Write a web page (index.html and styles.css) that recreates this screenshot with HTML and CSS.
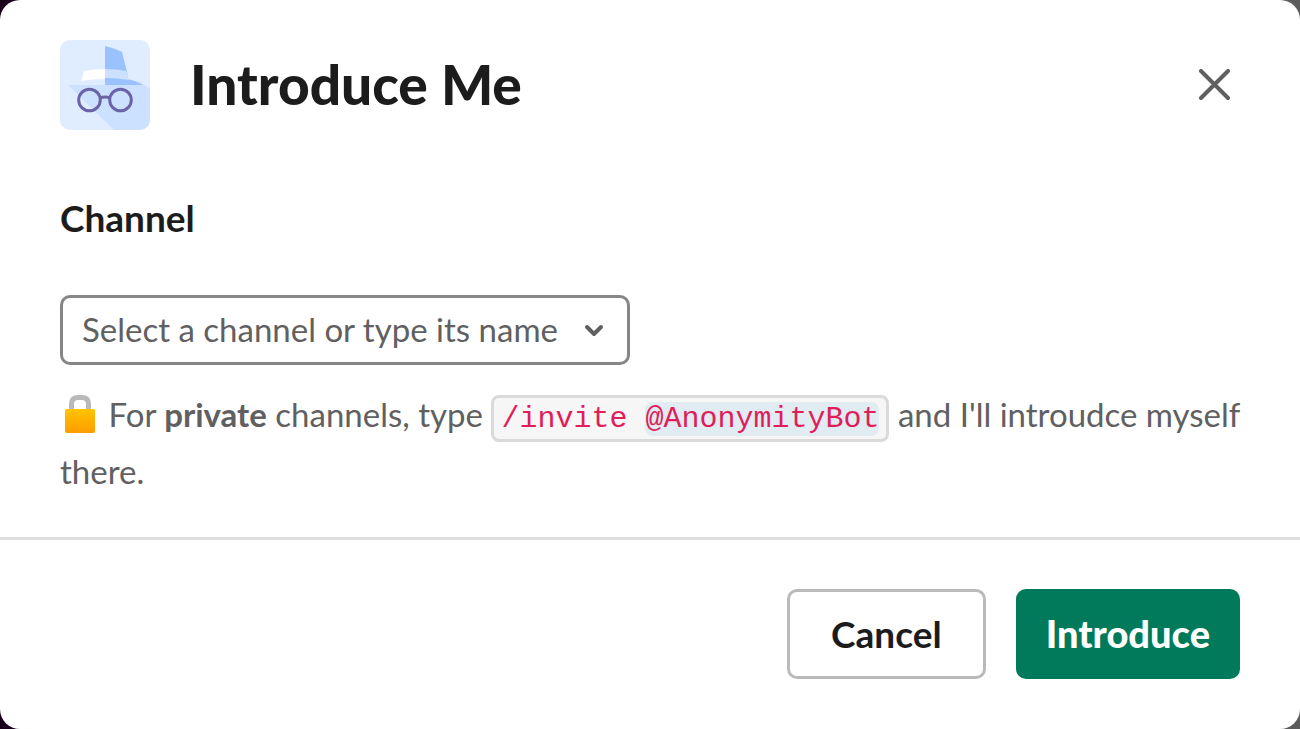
FILE: index.html
```html
<!DOCTYPE html>
<html lang="en">
<head>
<meta charset="utf-8">
<meta name="viewport" content="width=device-width, initial-scale=1">
<title>Introduce Me</title>
<link rel="stylesheet" href="styles.css">
</head>
<body>
<form class="modal" role="dialog" aria-labelledby="modal-title">
  <header class="modal-header">
    <svg class="app-icon" viewBox="0 0 90 90" aria-hidden="true">
      <path fill="#e0ecff" d="M0 0h90v90H0z"/>
      <path fill="#cce0ff" d="M8 45H82L76 39L90 49V90H54Z"/>
      <path fill="#fff" d="M24 31Q34 29 45 29V39Q32 39 21 41Z"/>
      <path fill="#99c2ff" d="M45 6Q54 8 62 12L67 32L68 39Q77 41 83 45H45Z"/>
      <path fill="#cce0ff" d="M45 29Q57 29 66 31L69 40Q57 38 45 38Z"/>
      <g fill="none" stroke="#6a63a8" stroke-width="3">
        <circle cx="29.500" cy="60" r="10.800"/>
        <circle cx="60.500" cy="60" r="10.800"/>
        <path d="M40 58Q45 56 50 58"/>
      </g>
    </svg>
    <h1 class="modal-title" id="modal-title">Introduce Me</h1>
    <button class="close-button" type="button" aria-label="Close">
      <svg class="close-icon" viewBox="0 0 32 32" aria-hidden="true"><path d="M3 2L30 29M30 2L3 29"/></svg>
    </button>
  </header>
  <div class="modal-body">
    <label class="field-label" for="channel">Channel</label>
    <div class="select-wrap">
      <select class="channel-select" id="channel">
        <option>Select a channel or type its name</option>
      </select>
      <svg class="chevron" viewBox="0 0 20 14" aria-hidden="true"><path d="M3 3L10 10L17 3"/></svg>
    </div>
    <p class="hint">
      <svg class="lock" viewBox="0 0 40 40" role="img" aria-label="Lock">
        <defs>
          <linearGradient id="lock-body" x2="0" y2="1"><stop stop-color="#ffc400"/><stop offset="1" stop-color="#ff9b00"/></linearGradient>
        </defs>
        <path fill="none" stroke="#b9b9b9" stroke-width="5" d="M11.500 17V10Q11.500 3.500 18 3.500H22Q28.500 3.500 28.500 10V17"/>
        <rect x="5" y="15" width="30" height="24" rx="2" fill="url(#lock-body)"/>
      </svg>
      For <strong>private</strong> channels, type <code class="command">/invite <span class="mention">@AnonymityBot</span></code> and I'll introudce myself there.
    </p>
  </div>
  <footer class="modal-footer">
    <button class="button button-cancel" type="button">Cancel</button>
    <button class="button button-primary" type="submit">Introduce</button>
  </footer>
</form>
</body>
</html>
```
FILE: styles.css
```css
*,
*::before,
*::after {
  box-sizing: border-box;
}

body {
  margin: 0;
  min-height: 100vh;
  display: flex;
  background: linear-gradient(90deg, #1a001a 50%, #5c5c5c 50%);
  color: #1d1c1d;
  font-family: Lato, "Liberation Sans", sans-serif;
}

.modal {
  flex: 1;
  display: flex;
  flex-direction: column;
  background: #fff;
  border-radius: 20px;
}

.modal-header {
  display: flex;
  align-items: center;
  gap: 40px;
  padding: 40px 60px;
}

.app-icon {
  flex: none;
  width: 90px;
  height: 90px;
  border-radius: 10px;
}

.modal-title {
  flex: 1;
  margin: 0;
  padding-bottom: 2px;
  font-family: "Lato Black", Lato, "Liberation Sans", sans-serif;
  font-size: 55px;
  line-height: 70px;
  font-weight: 900;
}

.close-button {
  display: flex;
  padding: 10px;
  border: 0;
  background: none;
}

.close-icon {
  width: 32px;
  height: 32px;
  fill: none;
  stroke: #616061;
  stroke-width: 4;
  stroke-linecap: round;
}

.modal-body {
  flex: 1;
  padding: 20px 60px 37px;
}

.field-label {
  display: block;
  margin-bottom: 50px;
  font-size: 37px;
  line-height: 55px;
  font-weight: 700;
}

.select-wrap {
  position: relative;
  max-width: 570px;
}

.channel-select {
  display: block;
  width: 100%;
  height: 70px;
  padding: 0 60px 2px 19px;
  appearance: none;
  border: 3px solid #868686;
  border-radius: 10px;
  background: #fff;
  color: #616061;
  font: 400 33px/50px Lato, "Liberation Sans", sans-serif;
}

.chevron {
  position: absolute;
  right: 26px;
  top: 29px;
  width: 20px;
  height: 14px;
  fill: none;
  stroke: #616061;
  stroke-width: 4;
  stroke-linecap: round;
  stroke-linejoin: round;
  pointer-events: none;
}

.hint {
  margin: 21px 0 0;
  color: #616061;
  font-size: 33px;
  line-height: 57px;
}

.lock {
  width: 40px;
  height: 40px;
  vertical-align: -7px;
}

.command {
  padding: 4px 7px 3px;
  border: 3px solid #dadada;
  border-radius: 8px;
  background: #f6f6f6;
  color: #e01e5a;
  font: 30px/1 "Liberation Mono", monospace;
}

.mention {
  border-radius: 8px;
  background: #e0ecf2;
}

.modal-footer {
  display: flex;
  justify-content: flex-end;
  gap: 30px;
  padding: 49px 60px 50px;
  border-top: 3px solid #dddddd;
}

.button {
  height: 90px;
  border: 0;
  border-radius: 10px;
  font: 700 37px/50px Lato, "Liberation Sans", sans-serif;
}

.button-cancel {
  padding: 0 41px;
  border: 3px solid #bababa;
  background: #fff;
  color: #1d1c1d;
}

.button-primary {
  padding: 0 30px 2px;
  background: #007a5a;
  color: #fff;
  font-family: "Lato Black", Lato, "Liberation Sans", sans-serif;
  font-size: 38px;
  font-weight: 900;
}
```
